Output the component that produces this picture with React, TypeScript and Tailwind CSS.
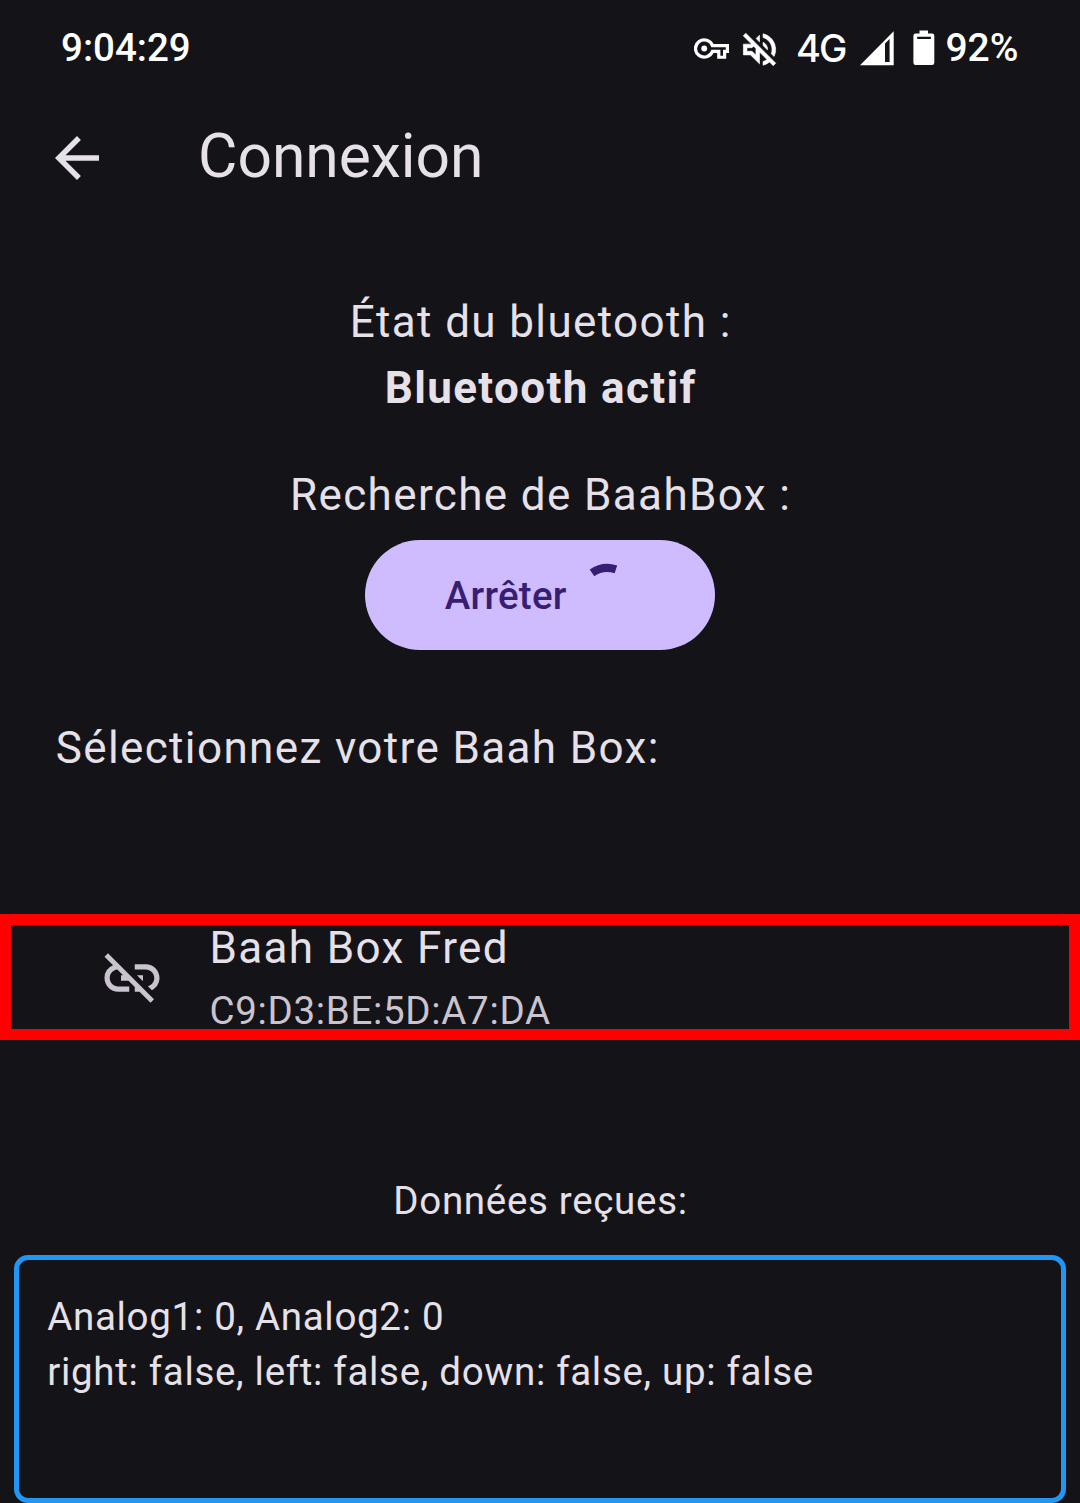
import { MdArrowBack, MdLinkOff } from "react-icons/md";

function KeyIcon() {
  return (
    <svg className="mt-[1px] size-[35px] shrink-0" viewBox="0 0 24 24" fill="none">
      <path d="M12.66 10H22.9V14H21V18H17V14H12.66A6 5.9 0 1 1 12.66 10Z" stroke="currentColor" strokeWidth="2.2" />
      <circle cx="7" cy="12" r="2" fill="currentColor" />
    </svg>
  );
}

function MutedIcon() {
  return (
    <svg className="ml-[9px] mt-[2px] size-[43px] shrink-0" viewBox="0 0 24 24" fill="currentColor" stroke="currentColor" strokeWidth="0.35">
      <path d="M4.34 2.93 2.93 4.34 7.29 8.7 7 9H3v6h4l5 5v-6.59l4.18 4.18c-.65.49-1.38.88-2.18 1.11v2.06a8.94 8.94 0 0 0 3.61-1.75l2.05 2.05 1.41-1.41zM10 15.17 7.83 13H5v-2h2.83l.88-.88L10 11.41zM19 12c0 .82-.15 1.61-.41 2.34l1.53 1.53c.56-1.17.88-2.48.88-3.87 0-4.28-2.99-7.86-7-8.77v2.06c2.89.86 5 3.54 5 6.71zm-7-8-1.88 1.88L12 7.76zm4.5 8A4.5 4.5 0 0 0 14 7.97v1.79l2.48 2.48c.01-.08.02-.16.02-.24z" />
    </svg>
  );
}

function SignalIcon() {
  return (
    <svg className="h-[36px] w-[36px] shrink-0" viewBox="0 0 36 36" fill="currentColor">
      <path fillRule="evenodd" d="M1 35.3 34.7 1.3V35.3ZM26 13.6V32H30.6V9Z" />
    </svg>
  );
}

function BatteryIcon() {
  return (
    <svg className="ml-[18px] h-[36px] w-[22px] shrink-0" viewBox="0 0 22 36" fill="currentColor">
      <path
        fillRule="evenodd"
        d="M6.5 0.5H15V3.5H19A2.3 2.3 0 0 1 21.3 5.8V32.7A2.3 2.3 0 0 1 19 35H2.7A2.3 2.3 0 0 1 .4 32.7V5.8A2.3 2.3 0 0 1 2.7 3.5H6.5ZM4.2 6.8V9H17.9V6.8Z"
      />
    </svg>
  );
}

function StatusBar() {
  return (
    <div className="flex h-[96px] items-center justify-between pl-[61px] pr-[61.5px] font-medium text-white">
      <span className="-mt-[2px] text-[38.5px] leading-[55px]">9:04:29</span>
      <div className="flex items-center">
        <KeyIcon />
        <MutedIcon />
        <span className="ml-[15px] w-[63.5px] font-['Inter',sans-serif] text-[38px] font-medium leading-[55px] tracking-[-2px]">4G</span>
        <SignalIcon />
        <BatteryIcon />
        <span className="ml-[10px] text-[39px] leading-[55px]">92%</span>
      </div>
    </div>
  );
}

function Spinner() {
  return (
    <svg className="size-[55px] overflow-visible" viewBox="0 0 55 55" fill="none">
      <path d="M12 4.8A27.5 27.5 0 0 1 35.9 1.4" stroke="#381E72" strokeWidth="8.25" />
    </svg>
  );
}

export default function App() {
  return (
    <div className="flex h-[1503px] w-[1080px] flex-col overflow-hidden bg-[#141318] font-['Roboto',sans-serif] text-[44px] leading-[66px] tracking-[1.375px] text-[#E6E1E9]">
      <div className="tracking-normal">
        <StatusBar />
      </div>
      <header className="flex h-[122px] items-center pl-[44px] tracking-normal">
        <MdArrowBack className="mt-[2px] size-[66px]" />
        <h1 className="-mt-[2px] ml-[88px] text-[60.5px] leading-[77px]">Connexion</h1>
      </header>
      <section className="mt-[71px] flex flex-col items-center">
        <p className="pl-[1.4px]">État du bluetooth :</p>
        <p className="pl-[1.4px] font-bold">Bluetooth actif</p>
        <p className="mt-[41px] pl-[1.4px]">Recherche de BaahBox :</p>
        <button className="mt-[12px] flex h-[110px] w-[350px] items-center justify-between rounded-full bg-[#CFBCFF] px-[79.7px] text-[38.5px] font-medium leading-[55px] tracking-[0.275px] text-[#381E72]">
          <span>Arrêter</span>
          <Spinner />
        </button>
      </section>
      <h2 className="mt-[65px] pl-[55.7px]">Sélectionnez votre Baah Box:</h2>
      <div className="mt-[133px] flex h-[126px] items-center border-[11px] border-[#FF0000] pl-[88px]">
        <MdLinkOff className="mt-[1px] size-[66px] text-[#CAC4CF]" />
        <div className="-mt-[2px] ml-[44.4px]">
          <p>Baah Box Fred</p>
          <p className="mt-[2px] text-[38.5px] leading-[55px] tracking-[0.6875px] text-[#CAC4CF]">C9:D3:BE:5D:A7:DA</p>
        </div>
      </div>
      <p className="mt-[133px] pl-[1px] text-center text-[38.5px] leading-[55px] tracking-[0.6875px]">Données reçues:</p>
      <div className="mx-[14px] mt-[27px] h-[248px] rounded-[14px] border-[5.5px] border-[#2196F3] pl-[28.2px] pt-[29px] text-[38.5px] leading-[55px] tracking-[0.6875px]">
        <p>Analog1: 0, Analog2: 0</p>
        <p>right: false, left: false, down: false, up: false</p>
      </div>
    </div>
  );
}
